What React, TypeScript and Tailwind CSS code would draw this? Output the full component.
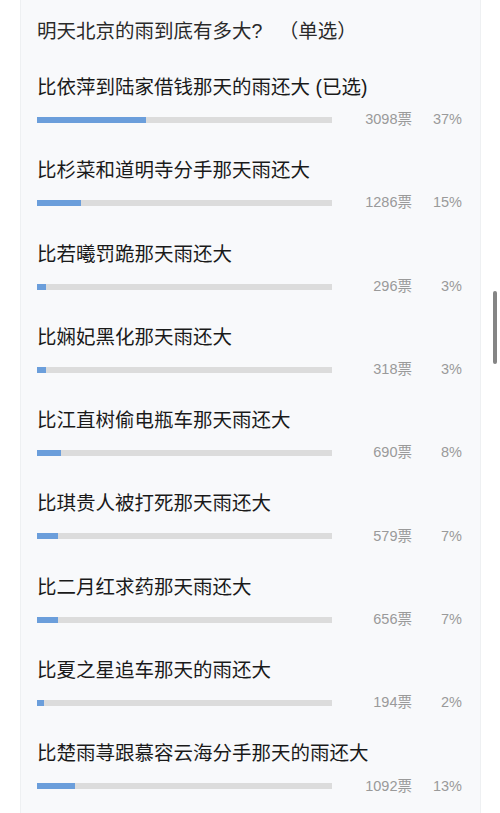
const options = [
  { label: '比依萍到陆家借钱那天的雨还大 (已选)', votes: 3098, pct: 37 },
  { label: '比杉菜和道明寺分手那天雨还大', votes: 1286, pct: 15 },
  { label: '比若曦罚跪那天雨还大', votes: 296, pct: 3 },
  { label: '比娴妃黑化那天雨还大', votes: 318, pct: 3 },
  { label: '比江直树偷电瓶车那天雨还大', votes: 690, pct: 8 },
  { label: '比琪贵人被打死那天雨还大', votes: 579, pct: 7 },
  { label: '比二月红求药那天雨还大', votes: 656, pct: 7 },
  { label: '比夏之星追车那天的雨还大', votes: 194, pct: 2 },
  { label: '比楚雨荨跟慕容云海分手那天的雨还大', votes: 1092, pct: 13 },
];

export default function App() {
  return (
    <div
      className="relative h-[813px] w-[500px] overflow-hidden bg-white"
      style={{ fontFamily: '"Liberation Sans", "Noto Sans CJK SC", sans-serif' }}
    >
      <div className="ml-[20px] mt-[-10px] h-[840px] w-[461px] border-x border-[#eef0f2] bg-[#f8f9fb] pl-[16px] pr-[18px] pt-[27px]">
        <h1 className="text-[19.5px] font-normal leading-[28px] text-[#2a2a2a]">
          明天北京的雨到底有多大?{'\u00a0\u00a0\u00a0'}（单选）
        </h1>
        <div className="mt-[28px] flex flex-col">
          {options.map((o) => (
            <div key={o.label} className="h-[83.3px]">
              <div className="text-[19.5px] leading-[28px] text-[#1a1a1a]">{o.label}</div>
              <div className="mt-[9px] flex h-[20px] items-center">
                <div className="h-[6px] w-[295px] bg-[#dcdcdc]">
                  <div className="h-full bg-[#6b9edb]" style={{ width: `${Math.max(o.pct, 2.4)}%` }} />
                </div>
                <div className="flex-1 text-right text-[14.5px] text-[#9a9a9a]">{o.votes}票</div>
                <div className="w-[50px] text-right text-[14.5px] text-[#9a9a9a]">{o.pct}%</div>
              </div>
            </div>
          ))}
        </div>
      </div>
      <div className="absolute left-[493px] top-[291px] h-[73px] w-[4px] rounded-full bg-[#858585]" />
    </div>
  );
}
